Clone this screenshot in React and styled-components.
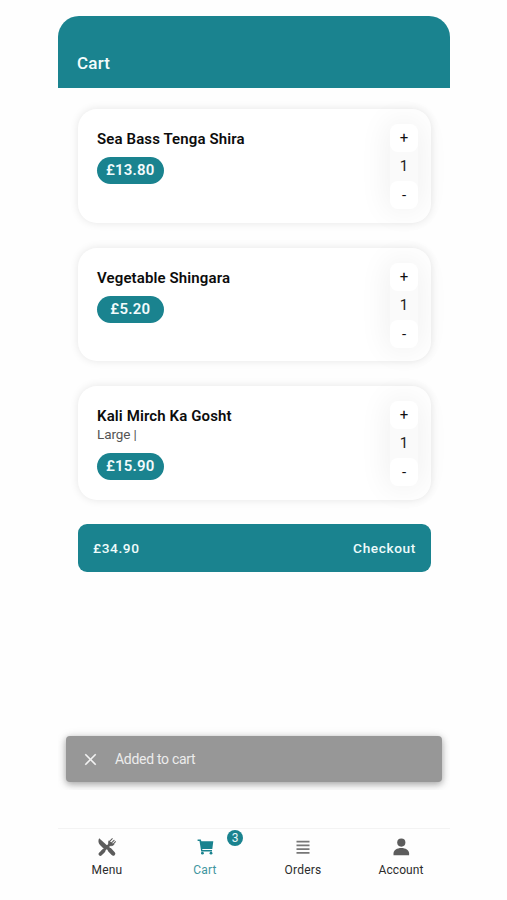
import styled, { createGlobalStyle } from 'styled-components';

const GlobalStyle = createGlobalStyle`
  * {
    box-sizing: border-box;
  }
  body {
    margin: 0;
    background: #fefefe;
    font-family: Roboto, sans-serif;
  }
`;

const Screen = styled.div`
  display: flex;
  flex-direction: column;
  width: 392px;
  height: 900px;
  margin-left: 58px;
  padding-top: 16px;
`;

const Header = styled.header`
  height: 72.4px;
  flex: none;
  padding: 36.5px 19px 0;
  border-radius: 21px 21px 0 0;
  background: #1a838f;
  color: #f4fcfc;
  font-size: 17px;
  font-weight: 500;
  line-height: 20px;
  letter-spacing: 0.2px;
`;

const Content = styled.main`
  display: flex;
  flex-direction: column;
  height: 701.6px;
  flex: none;
  padding: 20.7px 8px 8px;
  overflow: hidden;
`;

const CartList = styled.div`
  display: flex;
  flex-direction: column;
  gap: 24.8px;
  padding: 0 11px 0 12px;
`;

const Card = styled.article`
  display: flex;
  justify-content: space-between;
  height: 113.8px;
  padding: 15px 13px 14px 19px;
  border-radius: 19px;
  background: #fff;
  box-shadow: 0 0 8px rgba(0, 0, 0, 0.1);
`;

const ItemInfo = styled.div`
  display: flex;
  flex-direction: column;
  align-items: flex-start;
  padding-top: 5px;
`;

const ItemName = styled.h2`
  margin: 0;
  color: #0c0c0c;
  font-size: 15px;
  font-weight: 600;
  line-height: 20px;
  letter-spacing: 0.12px;
`;

const ItemOption = styled.span`
  color: #555;
  font-size: 13.5px;
  line-height: 17px;
  letter-spacing: -0.1px;
`;

const Price = styled.span`
  width: 66.5px;
  height: 27px;
  margin-top: ${(props) => (props.$compact ? '9.5px' : '8px')};
  border-radius: 14px;
  background: #1a838f;
  color: #f2fbfc;
  font-size: 15px;
  font-weight: 600;
  line-height: 27px;
  letter-spacing: 0.2px;
  text-align: center;
`;

const Stepper = styled.div`
  display: flex;
  flex-direction: column;
  align-items: center;
  width: 28px;
  height: 85px;
  border-radius: 9px;
  background: #fafafa;
  box-shadow: 0 0 30px 4px rgba(0, 0, 0, 0.06);
`;

const StepButton = styled.button`
  width: 28px;
  height: 28px;
  flex: none;
  padding: 0;
  border: 0;
  border-radius: 8px;
  background: #fff;
  color: #111;
  font-family: inherit;
  font-size: 15px;
  line-height: 28px;
`;

const Quantity = styled.span`
  color: #222;
  font-size: 15px;
  line-height: 29px;
`;

const CheckoutBar = styled.button`
  display: flex;
  align-items: center;
  justify-content: space-between;
  height: 47.5px;
  margin-top: -0.8px;
  padding: 0 15px;
  border: 0;
  border-radius: 9px;
  background: #1a838f;
  color: #eefbfb;
  font-family: inherit;
  font-size: 13.7px;
  font-weight: 500;
  letter-spacing: 0.6px;
`;

const Toast = styled.div`
  display: flex;
  align-items: center;
  gap: 18px;
  height: 45.5px;
  margin-top: auto;
  padding: 0 18px;
  border-radius: 4px;
  background: #979797;
  color: #ececec;
  font-size: 14px;
  line-height: 16px;
  letter-spacing: -0.3px;
  box-shadow: 0 2px 6px rgba(0, 0, 0, 0.28), 0 2px 12px rgba(0, 0, 0, 0.14);
`;

const Nav = styled.nav`
  display: grid;
  grid-template-columns: repeat(4, 1fr);
  height: 72px;
  margin-top: 38px;
  border-top: 1px solid #f3f3f3;
`;

const NavItem = styled.a`
  position: relative;
  display: flex;
  flex-direction: column;
  align-items: center;
  padding-top: 8px;
  color: ${(props) => (props.$active ? '#1a838f' : '#5c5c5c')};
`;

const NavLabel = styled.span`
  margin-top: 5px;
  color: ${(props) => (props.$active ? '#4196a0' : '#2c2c2c')};
  font-size: 12px;
  line-height: 16px;
  letter-spacing: ${(props) => (props.$tight ? '0.05px' : '0.2px')};
`;

const Badge = styled.span`
  position: absolute;
  top: 1px;
  left: 71px;
  width: 16px;
  height: 16px;
  border-radius: 50%;
  background: #1a838f;
  color: #e9f7f8;
  font-size: 12px;
  line-height: 16px;
  text-align: center;
`;

const CloseIcon = () => (
  <svg width="13" height="13" viewBox="0 0 13 13" stroke="#f2f2f2" strokeWidth="1.6">
    <path d="M1.3 1.3l10.400 10.400M11.700 1.3l-10.400 10.400" />
  </svg>
);

const MenuIcon = () => (
  <svg width="20" height="20" viewBox="0 0 20 20" fill="none" stroke="currentColor" strokeLinecap="round">
    <path d="M2.2 1.2C.9 3.3 1.2 6 3 7.900L6.500 11.400L9.500 11L11 9.300Z" fill="currentColor" stroke="none" />
    <path d="M9 9.500L12 12" strokeWidth="3" />
    <path d="M12.800 13L16.200 16.600" strokeWidth="4.200" />
    <path d="M3.400 17L6.500 14" strokeWidth="3.800" />
    <path d="M5.500 14.500L13.200 7" strokeWidth="2.600" />
    <path d="M11.900 3.800C11.100 5.400 11.300 7.600 12.300 8.300S15.500 9 17.200 7.400" fill="currentColor" strokeWidth="0.600" />
    <path d="M12.400 4.700L15.300 1.700M14 6.400L17.100 3.300M15.400 7.800L18.500 4.700" strokeWidth="1.050" />
  </svg>
);

const CartIcon = () => (
  <svg width="20" height="20" viewBox="0 0 20 20" fill="currentColor">
    <path d="M2.600 2.500H5.800L6.400 4.300H18.300L17.300 12H7.200L7.400 13.100H17V14.500H6.200L4.500 4H2.600Z" />
    <circle cx="7.400" cy="16.200" r="1.400" />
    <circle cx="16" cy="16.200" r="1.400" />
  </svg>
);

const OrdersIcon = () => (
  <svg width="20" height="20" viewBox="0 0 20 20" stroke="#777" strokeWidth="1.7">
    <path d="M3.5 4.6h13M3.5 8.4h13M3.5 12.200h13M3.5 15.800h13" />
  </svg>
);

const AccountIcon = () => (
  <svg width="20" height="20" viewBox="0 0 20 20" fill="currentColor">
    <circle cx="10.300" cy="5.600" r="4.100" />
    <path d="M2.500 18.200V16.500C2.500 13.200 6 11.100 10.300 11.100S18.100 13.200 18.100 16.500V18.200Z" />
  </svg>
);

const items = [
  { id: 1, name: 'Sea Bass Tenga Shira', price: '£13.80' },
  { id: 2, name: 'Vegetable Shingara', price: '£5.20' },
  { id: 3, name: 'Kali Mirch Ka Gosht', option: 'Large |', price: '£15.90' },
];

const tabs = [
  { label: 'Menu', icon: <MenuIcon /> },
  { label: 'Cart', icon: <CartIcon />, active: true, count: 3 },
  { label: 'Orders', icon: <OrdersIcon /> },
  { label: 'Account', icon: <AccountIcon />, tight: true },
];

const CartItem = ({ item }) => (
  <Card>
    <ItemInfo>
      <ItemName>{item.name}</ItemName>
      {item.option && <ItemOption>{item.option}</ItemOption>}
      <Price $compact={Boolean(item.option)}>{item.price}</Price>
    </ItemInfo>
    <Stepper>
      <StepButton>+</StepButton>
      <Quantity>1</Quantity>
      <StepButton>-</StepButton>
    </Stepper>
  </Card>
);

const App = () => {
  return (
    <>
      <GlobalStyle />
      <Screen>
        <Header>Cart</Header>
        <Content>
          <CartList>
            {items.map((item) => (
              <CartItem key={item.id} item={item} />
            ))}
            <CheckoutBar>
              <span>£34.90</span>
              <span>Checkout</span>
            </CheckoutBar>
          </CartList>
          <Toast>
            <CloseIcon />
            <span>Added to cart</span>
          </Toast>
        </Content>
        <Nav>
          {tabs.map((tab) => (
            <NavItem key={tab.label} $active={tab.active}>
              {tab.icon}
              <NavLabel $active={tab.active} $tight={tab.tight}>
                {tab.label}
              </NavLabel>
              {tab.count && <Badge>{tab.count}</Badge>}
            </NavItem>
          ))}
        </Nav>
      </Screen>
    </>
  );
};

export default App;
